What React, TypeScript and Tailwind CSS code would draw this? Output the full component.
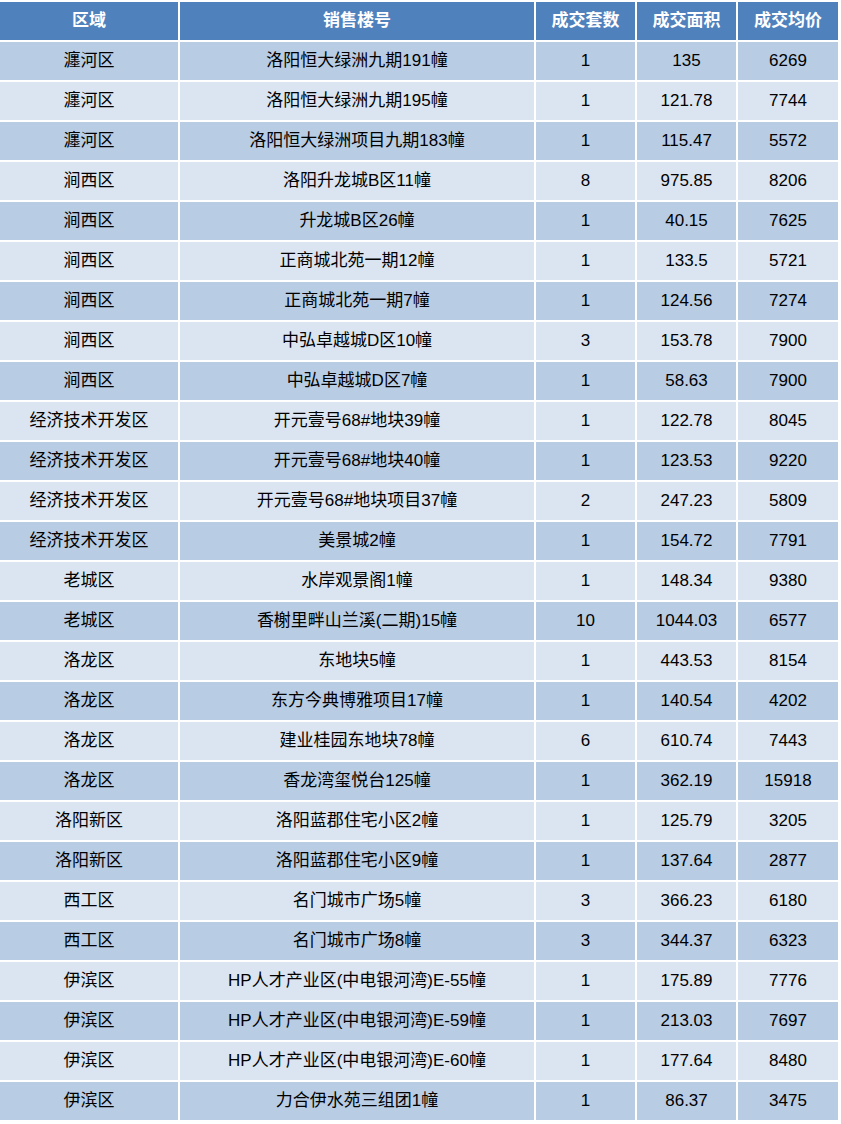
import React from "react";

const rows: [string, string, string, string, string][] = [
  ["瀍河区", "洛阳恒大绿洲九期191幢", "1", "135", "6269"],
  ["瀍河区", "洛阳恒大绿洲九期195幢", "1", "121.78", "7744"],
  ["瀍河区", "洛阳恒大绿洲项目九期183幢", "1", "115.47", "5572"],
  ["涧西区", "洛阳升龙城B区11幢", "8", "975.85", "8206"],
  ["涧西区", "升龙城B区26幢", "1", "40.15", "7625"],
  ["涧西区", "正商城北苑一期12幢", "1", "133.5", "5721"],
  ["涧西区", "正商城北苑一期7幢", "1", "124.56", "7274"],
  ["涧西区", "中弘卓越城D区10幢", "3", "153.78", "7900"],
  ["涧西区", "中弘卓越城D区7幢", "1", "58.63", "7900"],
  ["经济技术开发区", "开元壹号68#地块39幢", "1", "122.78", "8045"],
  ["经济技术开发区", "开元壹号68#地块40幢", "1", "123.53", "9220"],
  ["经济技术开发区", "开元壹号68#地块项目37幢", "2", "247.23", "5809"],
  ["经济技术开发区", "美景城2幢", "1", "154.72", "7791"],
  ["老城区", "水岸观景阁1幢", "1", "148.34", "9380"],
  ["老城区", "香榭里畔山兰溪(二期)15幢", "10", "1044.03", "6577"],
  ["洛龙区", "东地块5幢", "1", "443.53", "8154"],
  ["洛龙区", "东方今典博雅项目17幢", "1", "140.54", "4202"],
  ["洛龙区", "建业桂园东地块78幢", "6", "610.74", "7443"],
  ["洛龙区", "香龙湾玺悦台125幢", "1", "362.19", "15918"],
  ["洛阳新区", "洛阳蓝郡住宅小区2幢", "1", "125.79", "3205"],
  ["洛阳新区", "洛阳蓝郡住宅小区9幢", "1", "137.64", "2877"],
  ["西工区", "名门城市广场5幢", "3", "366.23", "6180"],
  ["西工区", "名门城市广场8幢", "3", "344.37", "6323"],
  ["伊滨区", "HP人才产业区(中电银河湾)E-55幢", "1", "175.89", "7776"],
  ["伊滨区", "HP人才产业区(中电银河湾)E-59幢", "1", "213.03", "7697"],
  ["伊滨区", "HP人才产业区(中电银河湾)E-60幢", "1", "177.64", "8480"],
  ["伊滨区", "力合伊水苑三组团1幢", "1", "86.37", "3475"],
];

const headers = ["区域", "销售楼号", "成交套数", "成交面积", "成交均价"];

export default function App() {
  return (
    <div
      className="w-[841px] h-[1124px] bg-white pt-[2px]"
      style={{ fontFamily: '"Liberation Sans", "Noto Sans CJK SC", sans-serif' }}
    >
      <div className="grid grid-cols-[178px_354px_99px_99px_100px] gap-[2px] auto-rows-[38px] text-[17px] text-black">
        {headers.map((h) => (
          <div
            key={h}
            className="bg-[#4f81bd] text-white font-bold flex items-center justify-center"
          >
            {h}
          </div>
        ))}
        {rows.map((r, i) =>
          r.map((c, j) => (
            <div
              key={i + "-" + j}
              className={
                (i % 2 === 0 ? "bg-[#b8cce4]" : "bg-[#dbe5f1]") +
                " flex items-center justify-center"
              }
            >
              {c}
            </div>
          ))
        )}
      </div>
    </div>
  );
}
